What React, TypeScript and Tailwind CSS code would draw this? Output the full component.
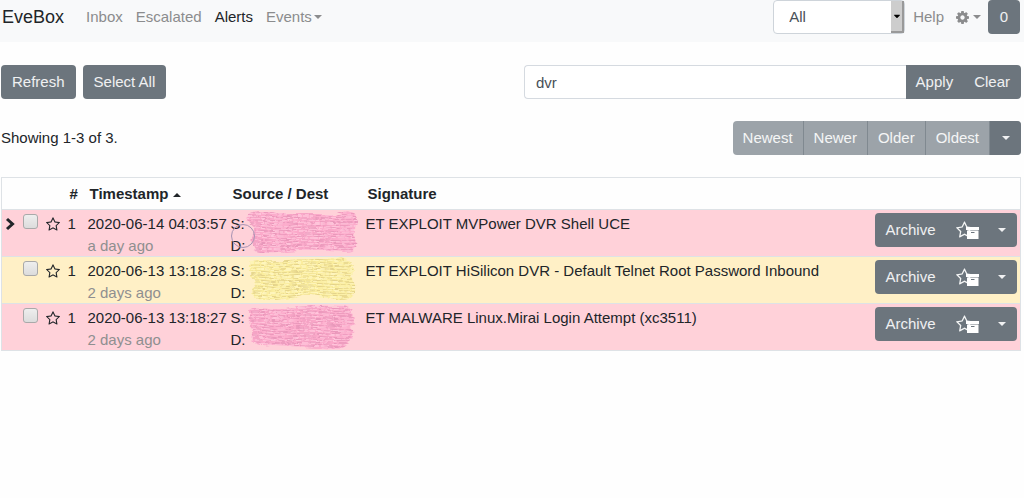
import { useState } from "react";
import { FaCaretDown } from "react-icons/fa";

const alerts = [
  {
    id: 1,
    count: 1,
    timestamp: "2020-06-14 04:03:57",
    age: "a day ago",
    signature: "ET EXPLOIT MVPower DVR Shell UCE",
    row: "bg-[#ffd1d9]",
    smudge: "pink",
    blob: "M3 6 C7 -1 21 1 30 4 L92 4 C99 0 110 0 112 9 C113 17 107 19 109 24 C114 31 111 42 101 42 C80 41 60 40 42 42 C27 44 10 45 8 35 C3 29 12 24 10 19 C6 15 1 13 3 6Z",
  },
  {
    id: 2,
    count: 1,
    timestamp: "2020-06-13 13:18:28",
    age: "2 days ago",
    signature:
      "ET EXPLOIT HiSilicon DVR - Default Telnet Root Password Inbound",
    row: "bg-[#fff0c6]",
    smudge: "yellow",
    blob: "M4 10 C3 2 20 4 40 3 L94 1 C108 1 111 12 105 20 C112 24 113 37 103 42 C90 46 72 36 58 38 C42 42 14 48 7 38 C4 33 12 29 10 25 C7 20 3 17 4 10Z",
  },
  {
    id: 3,
    count: 1,
    timestamp: "2020-06-13 13:18:27",
    age: "2 days ago",
    signature: "ET MALWARE Linux.Mirai Login Attempt (xc3511)",
    row: "bg-[#ffd1d9]",
    smudge: "pink",
    blob: "M4 9 C4 2 18 3 32 5 C48 3 72 1 98 2 C110 3 111 18 106 24 C110 32 104 43 96 44 C70 45 42 41 26 41 C12 42 5 38 6 31 C9 27 6 24 5 20 C3 17 4 13 4 9Z",
  },
];

const smudgeColors = {
  pink: { fill: "#fcabcb", dark: "#e08fb3", light: "#ffcde0" },
  yellow: { fill: "#fbee9f", dark: "#d8c682", light: "#fff8c8" },
};

const Caret = ({ up = false }) => (
  <svg
    viewBox="0 0 8 4"
    className="inline-block w-2 h-1 align-middle"
    fill="currentColor"
  >
    <path d={up ? "M0 4L4 0L8 4Z" : "M0 0L4 4L8 0Z"} />
  </svg>
);

const Star = ({ className }) => (
  <svg viewBox="0 0 1664 1664" className={className} fill="currentColor">
    <path d="M1137 1004l306-297-422-62-189-382-189 382-422 62 306 297-73 421 378-199 377 199zM1664 647q0 22-26 48l-363 354 86 500q1 7 1 20 0 50-41 50-19 0-40-12l-449-236-449 236q-22 12-40 12-21 0-31.5-14.5t-10.5-35.5q0-6 2-20l86-500-364-354q-25-27-25-48 0-37 56-46l502-73 225-455q19-41 49-41t49 41l225 455 502 73q56 9 56 46z" />
  </svg>
);

const Cog = ({ className }) => (
  <svg viewBox="0 128 1536 1536" className={className} fill="currentColor">
    <path d="M1024 896q0-106-75-181t-181-75-181 75-75 181 75 181 181 75 181-75 75-181zm512-109v222q0 12-8 23t-20 13l-185 28q-19 54-39 91 35 50 107 138 10 12 10 25t-9 23q-27 37-99 108t-94 71q-12 0-26-9l-138-108q-44 23-91 38-16 136-29 186-7 28-36 28h-222q-14 0-24.5-8.5t-11.5-21.5l-28-184q-49-16-90-37l-141 107q-10 9-25 9-14 0-25-11-126-114-165-168-7-10-7-23 0-12 8-23 15-21 51-66.5t54-70.5q-27-50-41-99l-183-27q-13-2-21-12.5t-8-23.5v-222q0-12 8-23t19-13l186-28q14-46 39-92-40-57-107-138-10-12-10-24 0-10 9-23 26-36 98.5-107.5t94.5-71.5q13 0 26 10l138 107q44-23 91-38 16-136 29-186 7-28 36-28h222q14 0 24.5 8.5t11.5 21.5l28 184q49 16 90 37l142-107q9-9 24-9 13 0 25 10 129 119 165 170 7 8 7 22 0 12-8 23-15 21-51 66.5t-54 70.5q26 50 41 98l183 28q13 2 21 12.5t8 23.5z" />
  </svg>
);

const Chevron = () => (
  <svg viewBox="0 0 10 14" className="w-2.5 h-3.5" fill="none">
    <path d="M2 2L7.5 7L2 12" stroke="currentColor" strokeWidth="3" />
  </svg>
);

const StarArchive = () => (
  <svg viewBox="0 0 24 20" className="w-6 h-5">
    <g transform="translate(0 1) scale(0.0102)" fill="#f4f5f5">
      <path d="M1137 1004l306-297-422-62-189-382-189 382-422 62 306 297-73 421 378-199 377 199zM1664 647q0 22-26 48l-363 354 86 500q1 7 1 20 0 50-41 50-19 0-40-12l-449-236-449 236q-22 12-40 12-21 0-31.5-14.5t-10.5-35.5q0-6 2-20l86-500-364-354q-25-27-25-48 0-37 56-46l502-73 225-455q19-41 49-41t49 41l225 455 502 73q56 9 56 46z" />
    </g>
    <path d="M10 7H23V10H10Z M11 10.5H22.5V19H11Z" fill="#fff" />
    <path d="M15 12.5H18.5" stroke="#6c757d" strokeWidth="1" />
  </svg>
);

// Painted-over addresses
const Smudge = ({ id, blob, color }) => {
  const c = smudgeColors[color];
  const lines = Array.from({ length: 16 }, (_, i) => i * 3);
  return (
    <svg viewBox="0 0 116 46" className="w-[116px] h-[46px] shrink-0">
      <defs>
        <clipPath id={`clip-${id}`}>
          <path d={blob} />
        </clipPath>
        <filter id={`rough-${id}`} x="-5%" y="-5%" width="110%" height="110%">
          <feTurbulence
            type="fractalNoise"
            baseFrequency="0.05 0.3"
            numOctaves="2"
            seed={id * 3}
          />
          <feDisplacementMap
            in="SourceGraphic"
            scale="6"
            xChannelSelector="R"
            yChannelSelector="G"
          />
        </filter>
      </defs>
      <g filter={`url(#rough-${id})`}>
        <path d={blob} fill={c.fill} />
        <g clipPath={`url(#clip-${id})`} fill="none">
          {lines.map((y) => (
            <g key={y}>
              <path
                d={`M0 ${y} C20 ${y - 3} 25 ${y + 3} 48 ${y} S90 ${y + 3} 116 ${y}`}
                stroke={c.dark}
                strokeWidth="0.7"
                strokeDasharray="9 1 5 2"
                strokeDashoffset={y * 5}
              />
              <path
                d={`M0 ${y + 1} C20 ${y - 2} 25 ${y + 4} 48 ${y + 1} S90 ${y + 4} 116 ${y + 1}`}
                stroke={c.light}
                strokeWidth="0.8"
                strokeDasharray="4 2 7 1"
                strokeDashoffset={y * 3}
              />
            </g>
          ))}
        </g>
      </g>
    </svg>
  );
};

const App = () => {
  const [filter, setFilter] = useState("dvr");
  const [selected, setSelected] = useState([]);

  const toggle = (id) => {
    setSelected((prev) =>
      prev.includes(id) ? prev.filter((x) => x !== id) : [...prev, id]
    );
  };

  return (
    <div className="min-h-screen bg-[#fefefe] font-['Liberation_Sans',Arial,sans-serif] text-[15px] leading-[22px] text-[#212529]">
      <nav className="flex items-center bg-[#f8f9fa] pl-0.5 pr-1 pb-2">
        <a href="#" className="text-lg leading-[34px]">
          EveBox
        </a>
        <div className="flex gap-[13px] pl-[22px] text-[#8b8c8d]">
          <a href="#inbox">Inbox</a>
          <a href="#escalated">Escalated</a>
          <a href="#alerts" className="text-[#212529]">
            Alerts
          </a>
          <a href="#events" className="flex items-center gap-0.5">
            Events <Caret />
          </a>
        </div>
        <div className="ml-auto flex items-center text-[#8b8c8d]">
          <div className="relative">
            <select
              aria-label="Sensor"
              className="block appearance-none w-[132px] h-[34px] pl-[15px] rounded border border-[#ced4da] bg-white text-[#495057]"
            >
              <option>All</option>
            </select>
            <span className="pointer-events-none absolute right-px inset-y-px w-[13px] flex items-center justify-center bg-[#cdcdcd] border-r-2 border-b-2 border-[#999] text-black">
              <FaCaretDown className="size-2.5" />
            </span>
          </div>
          <a href="#help" className="ml-2">
            Help
          </a>
          <button aria-label="Settings" className="ml-3 flex items-center gap-1">
            <Cog className="size-[13px]" />
            <Caret />
          </button>
          <button className="ml-[7px] w-8 h-[34px] rounded bg-[#6c757d] text-white/90">
            0
          </button>
        </div>
      </nav>

      <main className="pl-px pr-[3px]">
        <div className="flex mt-[23px]">
          <button className="h-[34px] px-[11px] rounded bg-[#6c757d] text-white/90">
            Refresh
          </button>
          <button className="h-[34px] px-[11px] ml-[7px] rounded bg-[#6c757d] text-white/90">
            Select All
          </button>
          <form
            className="ml-auto flex w-[497px]"
            onSubmit={(e) => e.preventDefault()}
          >
            <input
              type="text"
              aria-label="Filter"
              value={filter}
              onChange={(e) => setFilter(e.target.value)}
              className="flex-1 min-w-0 h-[34px] px-[11px] rounded-l border border-r-0 border-[#d5dae0] bg-white text-[#495057]"
            />
            <button className="h-[34px] px-[10px] bg-[#6c757d] text-white/90">
              Apply
            </button>
            <button
              type="button"
              className="h-[34px] px-[11px] rounded-r bg-[#6c757d] text-white/90"
              onClick={() => setFilter("")}
            >
              Clear
            </button>
          </form>
        </div>

        <div className="flex items-center justify-between mt-[22px]">
          <span>Showing 1-3 of 3.</span>
          <div className="flex h-[34px] rounded overflow-hidden bg-[#9ca3a9] text-white/90 divide-x divide-[#808990]">
            <button className="px-[10px]">Newest</button>
            <button className="px-[10px]">Newer</button>
            <button className="px-[10px]">Older</button>
            <button className="px-[10px]">Oldest</button>
            <button
              aria-label="Sort options"
              className="w-[31px] flex items-center justify-center bg-[#6c757d]"
            >
              <Caret />
            </button>
          </div>
        </div>

        <table className="mt-[22px] w-full table-fixed border border-[#dee2e6]">
          <colgroup>
            <col className="w-5" />
            <col className="w-6" />
            <col className="w-[22px]" />
            <col className="w-5" />
            <col className="w-[143px]" />
            <col className="w-[135px]" />
            <col />
            <col className="w-[146px]" />
          </colgroup>
          <thead>
            <tr className="h-8 text-left">
              <th></th>
              <th></th>
              <th></th>
              <th className="pl-0.5">#</th>
              <th className="pl-0.5">
                Timestamp <Caret up />
              </th>
              <th className="pl-0.5">Source / Dest</th>
              <th className="pl-0.5">Signature</th>
              <th></th>
            </tr>
          </thead>
          <tbody>
            {alerts.map((alert, i) => (
              <tr
                key={alert.id}
                className={`h-[47px] border-t border-[#dee2e6] align-top ${alert.row}`}
              >
                <td className="pt-[7px] pl-[3px]">
                  {i === 0 && <Chevron />}
                </td>
                <td className="pt-1 pl-px">
                  <input
                    type="checkbox"
                    aria-label={`Select ${alert.signature}`}
                    checked={selected.includes(alert.id)}
                    onChange={() => toggle(alert.id)}
                    className="block appearance-none size-[15px] rounded-[3px] border border-[#a9a9a9] bg-linear-to-b from-[#eee] to-[#dcdcdc] checked:from-[#777] checked:to-[#777]"
                  />
                </td>
                <td className="pt-[7px]">
                  <Star className="size-3.5" />
                </td>
                <td className="pt-[3px]">{alert.count}</td>
                <td className="pt-[3px]">
                  {alert.timestamp}
                  <div className="leading-[21px] text-[#8f8f90]">
                    {alert.age}
                  </div>
                </td>
                <td>
                  <div className="relative flex">
                    <div className="pt-[3px] w-3.5 shrink-0">
                      <div>S:</div>
                      <div className="leading-[21px]">D:</div>
                    </div>
                    <Smudge
                      id={alert.id}
                      blob={alert.blob}
                      color={alert.smudge}
                    />
                    {i === 0 && (
                      <span className="absolute left-0 top-3.5 size-6 rounded-full border border-[#a793b3]" />
                    )}
                  </div>
                </td>
                <td className="pt-[3px] whitespace-nowrap">
                  {alert.signature}
                </td>
                <td className="pt-[3px] pr-[3px]">
                  <div className="flex h-[34px] rounded bg-[#6c757d] text-white/90">
                    <button className="px-[11px]">Archive</button>
                    <button
                      aria-label="Escalate and archive"
                      className="flex-1 pl-1 flex items-center justify-center"
                    >
                      <StarArchive />
                    </button>
                    <button
                      aria-label="More actions"
                      className="w-[31px] flex items-center justify-center"
                    >
                      <Caret />
                    </button>
                  </div>
                </td>
              </tr>
            ))}
          </tbody>
        </table>
      </main>
    </div>
  );
};

export default App;
